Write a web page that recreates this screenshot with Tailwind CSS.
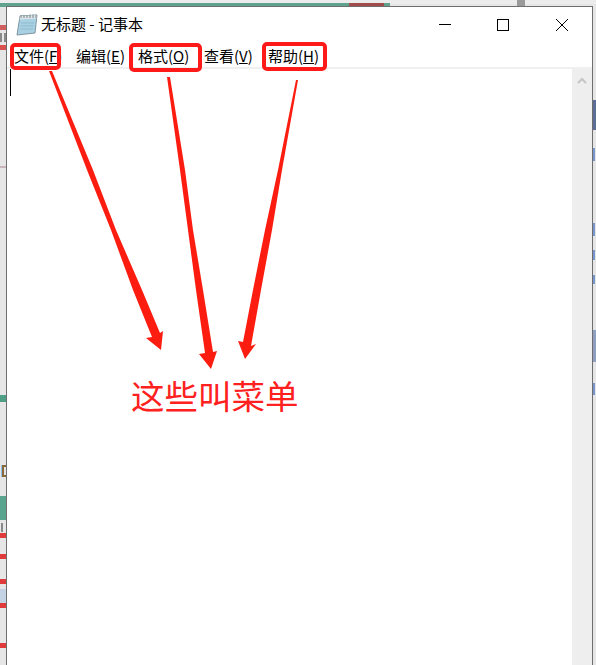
<!DOCTYPE html>
<html>
<head>
<meta charset="utf-8">
<script src="https://cdn.jsdelivr.net/npm/@tailwindcss/browser@4"></script>
</head>
<body class="bg-[#e4e4e4]">
<div class="relative w-[596px] h-[665px] overflow-hidden bg-[#e6e6e6] font-['Noto_Sans_CJK_SC','Noto_Sans',sans-serif]">
  <!-- Background desktop -->
  <div class="absolute left-0 top-0 w-[596px] h-[4px] bg-[#ececec]"></div>
  <div class="absolute left-0 top-[3px] w-[390px] h-[4px] bg-[#5fa38f]"></div>
  <div class="absolute left-[349px] top-[3px] w-[35px] h-[4px] bg-[#a14b4b]"></div>
  <div class="absolute left-[517px] top-0 w-[8px] h-[7px] bg-[#9a9a9a]"></div>
  <div class="absolute left-0 top-[25px] w-[6px] h-[5px] bg-[#d25f5f]"></div>
  <div class="absolute left-0 top-[33px] w-[2px] h-[9px] bg-[#8a8a8a]"></div>
  <div class="absolute left-[4px] top-[33px] w-[2px] h-[9px] bg-[#8a8a8a]"></div>
  <div class="absolute left-0 top-[45px] w-[6px] h-[5px] bg-[#d85050]"></div>
  <div class="absolute left-0 top-[166px] w-[6px] h-[2px] bg-[#c9b4bd]"></div>
  <div class="absolute left-0 top-[395px] w-[6px] h-[7px] bg-[#4f9e86]"></div>
  <div class="absolute left-[1px] top-[465px] w-[1px] h-[12px] bg-[#8cc4ea]"></div>
  <div class="absolute left-[2px] top-[465px] w-[4px] h-[12px] border-2 border-r-0 border-[#8a6a3a]"></div>
  <div class="absolute left-0 top-[496px] w-[6px] h-[24px] bg-[#5aa38e]"></div>
  <div class="absolute left-[1px] top-[523px] w-[4px] h-[9px] border-l-2 border-[#8a8a8a]"></div>
  <div class="absolute left-0 top-[533px] w-[6px] h-[5px] bg-[#e03a3a]"></div>
  <div class="absolute left-0 top-[554px] w-[6px] h-[5px] bg-[#e03a3a]"></div>
  <div class="absolute left-0 top-[579px] w-[6px] h-[5px] bg-[#e03a3a]"></div>
  <div class="absolute left-0 top-[589px] w-[6px] h-[14px] bg-[#c3d3e3]"></div>
  <div class="absolute left-0 top-[603px] w-[6px] h-[5px] bg-[#e03a3a]"></div>
  <div class="absolute left-0 top-[643px] w-[6px] h-[5px] bg-[#e03a3a]"></div>
  <div class="absolute left-[593px] top-[100px] w-[3px] h-[30px] bg-[#5c6e96]"></div>
  <div class="absolute left-[593px] top-[148px] w-[2px] h-[13px] bg-[#7a95cc]"></div>
  <div class="absolute left-[593px] top-[223px] w-[2px] h-[13px] bg-[#7a95cc]"></div>
  <div class="absolute left-[593px] top-[250px] w-[2px] h-[10px] bg-[#7a95cc]"></div>
  <div class="absolute left-[593px] top-[275px] w-[2px] h-[9px] bg-[#7a95cc]"></div>
  <div class="absolute left-[593px] top-[330px] w-[3px] h-[32px] bg-[#8e9fc0]"></div>
  <div class="absolute left-[593px] top-[383px] w-[2px] h-[12px] bg-[#7a95cc]"></div>

  <!-- Notepad window -->
  <div class="absolute left-[6px] top-[6px] w-[587px] h-[659px] bg-white border-t border-l border-r border-[#6e6e6e] flex flex-col">
    <div class="h-[36px] flex items-center shrink-0">
      <svg class="ml-[9px] w-[22px] h-[24px]" viewBox="0 0 22 24">
        <path d="M4 3 L21 2 L19 20 L1 22 Z" fill="#a8d2e4" stroke="#7f959f" stroke-width="1"/>
        <path d="M4 3 L21 2 L20.6 5.5 L3.6 6.5 Z" fill="#dfe6e8"/>
        <path d="M5 2 V5 M8 2 V5 M11 2 V5 M14 1.5 V5 M17 1.5 V5 M20 1.5 V5" stroke="#76858c" stroke-width="1"/>
        <path d="M5 10 H18 M4.6 13 H17.6 M4.2 16 H17.2" stroke="#90bacd" stroke-width="1"/>
      </svg>
      <span class="ml-[3px] -mt-[2px] text-[15px] leading-[20px] text-black">无标题 - 记事本</span>
      <div class="ml-auto flex items-center h-full">
        <svg class="w-[12px] h-[12px] mr-[46px]" viewBox="0 0 12 12"><path d="M0 5.5 H12" stroke="#000" stroke-width="1"/></svg>
        <svg class="w-[12px] h-[12px] mr-[47px]" viewBox="0 0 12 12"><rect x="0.5" y="0.5" width="11" height="11" fill="none" stroke="#000" stroke-width="1"/></svg>
        <svg class="w-[12px] h-[12px] mr-[24px]" viewBox="0 0 12 12"><path d="M0 0 L12 12 M12 0 L0 12" stroke="#000" stroke-width="1"/></svg>
      </div>
    </div>
    <div class="h-[24px] shrink-0 pt-[2px] text-[15px] leading-[20px] text-black flex items-center">
      <span class="ml-[7px] w-[62px] shrink-0">文件(<u>F</u>)</span>
      <span class="w-[62px] shrink-0">编辑(<u>E</u>)</span>
      <span class="w-[66px] shrink-0">格式(<u>O</u>)</span>
      <span class="w-[64px] shrink-0">查看(<u>V</u>)</span>
      <span class="shrink-0">帮助(<u>H</u>)</span>
    </div>
    <div class="h-[2px] bg-[#f0f0f0] shrink-0"></div>
    <div class="flex-1 flex min-h-0">
      <div class="flex-1 relative">
        <div class="absolute left-[3px] top-0 w-px h-[27px] bg-black"></div>
      </div>
      <div class="w-[20px] bg-[#eeeeee] flex justify-center pt-[8px]">
        <svg class="w-[10px] h-[7px]" viewBox="0 0 10 7"><path d="M1 6 L5 2 L9 6" fill="none" stroke="#c4c4c4" stroke-width="2"/></svg>
      </div>
    </div>
  </div>

  <!-- Red annotation overlay -->
  <svg class="absolute left-0 top-0" width="596" height="665" viewBox="0 0 596 665" fill="none">
    <g stroke="#ff1a1a" stroke-width="4">
      <rect x="12" y="45" width="47" height="23" rx="3"/>
      <rect x="131" y="45" width="69" height="25" rx="3"/>
      <rect x="264" y="44" width="61" height="25" rx="3"/>
    </g>
    <g fill="#fc1c10">
      <path d="M49 71 L52 71 L93 170 L116 230 L142 290 L160 333 L163 331 L161 350 L146 338 L152 337 L133 290 L111 230 L87 170 Z"/>
      <path d="M167 77 L170 77 L185 170 L193 230 L203 290 L213 352 L217 351 L211 369 L199 354 L205 353 L196 290 L188 230 L180 170 Z"/>
      <path d="M296 80 L298 80 L282 170 L272 230 L261 290 L251 346 L256 344 L245 359 L238 341 L243 342 L253 290 L265 230 L278 170 Z"/>
    </g>
  </svg>
  <div class="absolute left-[131px] top-[372px] text-[33.5px] leading-[46px] text-[#ff2020] whitespace-nowrap">这些叫菜单</div>
</div>
</body>
</html>
